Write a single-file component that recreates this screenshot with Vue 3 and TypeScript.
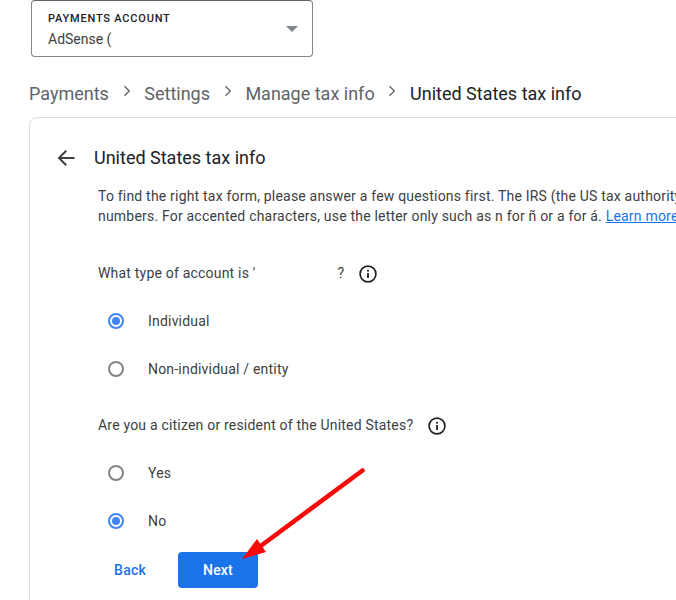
<script setup lang="ts">
const crumbs: string[] = ['Payments', 'Settings', 'Manage tax info']
</script>

<template>
  <div class="page">
    <div class="select">
      <div class="select-text">
        <div class="select-label">PAYMENTS ACCOUNT</div>
        <div class="select-value">AdSense (</div>
      </div>
      <span class="caret"></span>
    </div>

    <nav class="crumbs">
      <template v-for="c in crumbs" :key="c">
        <span class="crumb">{{ c }}</span>
        <svg class="chev" width="10" height="14" viewBox="0 0 10 14">
          <path d="M2.5 2.2 7.3 7 2.5 11.8" fill="none" stroke="#5f6368" stroke-width="1.3" />
        </svg>
      </template>
      <span class="crumb current">United States tax info</span>
    </nav>

    <section class="card">
      <header class="card-head">
        <svg class="back" width="20" height="20" viewBox="0 0 20 20">
          <path d="M18.5 10H3.2M10.2 2.8 3 10l7.2 7.2" fill="none" stroke="#3c4043" stroke-width="2" />
        </svg>
        <h1 class="title">United States tax info</h1>
      </header>

      <div class="body">
        <p class="intro">To find the right tax form, please answer a few questions first. The IRS (the US tax authority) requires<br />numbers. For accented characters, use the letter only such as n for ñ or a for á. <a class="link">Learn more</a></p>

        <div class="question q1">
          <span>What type of account is '</span><span class="redact"></span><span>?</span>
          <svg class="info" width="20" height="20" viewBox="0 0 20 20">
            <circle cx="10" cy="10" r="7.9" fill="none" stroke="#202124" stroke-width="1.7" />
            <rect x="9.1" y="9" width="1.8" height="5" fill="#202124" />
            <rect x="9.1" y="5.8" width="1.8" height="1.8" fill="#202124" />
          </svg>
        </div>
        <div class="radio"><span class="dot on"></span><span>Individual</span></div>
        <div class="radio"><span class="dot"></span><span>Non-individual / entity</span></div>

        <div class="question q2">
          <span>Are you a citizen or resident of the United States?</span>
          <svg class="info" width="20" height="20" viewBox="0 0 20 20">
            <circle cx="10" cy="10" r="7.9" fill="none" stroke="#202124" stroke-width="1.7" />
            <rect x="9.1" y="9" width="1.8" height="5" fill="#202124" />
            <rect x="9.1" y="5.8" width="1.8" height="1.8" fill="#202124" />
          </svg>
        </div>
        <div class="radio"><span class="dot"></span><span>Yes</span></div>
        <div class="radio"><span class="dot on"></span><span>No</span></div>

        <div class="actions">
          <button class="btn-back" type="button">Back</button>
          <button class="btn-next" type="button">Next</button>
        </div>
      </div>
    </section>

    <svg class="arrow" width="130" height="100" viewBox="0 0 130 100">
      <path d="M122.5 5.5 22 80" fill="none" stroke="#f70a0a" stroke-width="4.6" stroke-linecap="round" />
      <path d="M2 94 17 74 26 87Z" fill="#f70a0a" />
    </svg>
  </div>
</template>

<style>
body { margin: 0; background: #fff; }
</style>

<style scoped>
.page {
  position: relative;
  width: 676px;
  height: 600px;
  overflow: hidden;
  background: #fff;
  font-family: Roboto, "Liberation Sans", sans-serif;
  color: #3c4043;
  font-size: 14px;
}
.select {
  box-sizing: border-box;
  width: 282px;
  height: 57px;
  margin-left: 31px;
  padding: 0 14px 0 16px;
  border: 1px solid #80868b;
  border-top-color: #5f6368;
  border-radius: 4px;
  display: flex;
  align-items: center;
  justify-content: space-between;
}
.select-label {
  font-size: 11px;
  font-weight: 500;
  line-height: 16px;
  letter-spacing: 0.8px;
  color: #202124;
  margin-top: 2px;
}
.select-value {
  font-size: 14px;
  line-height: 20px;
  margin-top: 2px;
  color: #3c4043;
}
.caret {
  width: 0;
  height: 0;
  border-left: 6px solid transparent;
  border-right: 6px solid transparent;
  border-top: 6px solid #80868b;
}
.crumbs {
  display: flex;
  align-items: center;
  height: 30px;
  margin: 21px 0 0 29px;
  font-size: 18px;
  color: #5f6368;
  white-space: nowrap;
}
.chev { margin: -4px 12.7px 0 12.7px; flex: none; }
.current { color: #202124; }
.card {
  box-sizing: border-box;
  width: 720px;
  height: 560px;
  margin: 9px 0 0 29px;
  border: 1px solid #dadce0;
  border-radius: 8px;
}
.card-head {
  display: flex;
  align-items: center;
  height: 24px;
  margin: 28px 0 0 26px;
}
.back { flex: none; }
.title {
  margin: 0 0 0 18px;
  font-size: 18px;
  font-weight: 400;
  line-height: 24px;
  color: #202124;
  white-space: nowrap;
}
.body { margin-left: 68px; }
.intro {
  margin: 16px 0 0;
  line-height: 20px;
  white-space: nowrap;
  letter-spacing: 0.2px;
}
.link { color: #1a73e8; text-decoration: underline; }
.question {
  display: flex;
  align-items: center;
  height: 24px;
  white-space: nowrap;
  letter-spacing: 0.2px;
}
.q1 { margin-top: 35px; }
.q2 { margin-top: 20px; }
.redact { width: 82px; }
.info { margin-left: 14px; flex: none; margin-top: 2px; }
.radio {
  display: flex;
  align-items: center;
  height: 48px;
  letter-spacing: 0.2px;
}
.q1 + .radio { margin-top: 12px; }
.q2 + .radio { margin-top: 12px; }
.dot {
  box-sizing: border-box;
  width: 16px;
  height: 16px;
  margin: 0 24px 0 10px;
  border: 2px solid #80868b;
  border-radius: 50%;
  flex: none;
  position: relative;
}
.dot.on { border-color: #4285f4; }
.dot.on::after {
  content: "";
  position: absolute;
  inset: 2px;
  border-radius: 50%;
  background: #4285f4;
}
.actions {
  display: flex;
  align-items: center;
  gap: 15px;
  margin-top: 7px;
}
.btn-back, .btn-next {
  font-family: inherit;
  font-size: 14px;
  font-weight: 500;
  letter-spacing: 0.2px;
  height: 36px;
  border: 0;
  border-radius: 4px;
  cursor: pointer;
}
.btn-back {
  width: 65px;
  background: transparent;
  color: #1a73e8;
  padding: 0 1px 0 0;
}
.btn-next {
  width: 80px;
  background: #1a73e8;
  color: #fff;
}
.arrow {
  position: absolute;
  left: 240px;
  top: 465px;
}
</style>
